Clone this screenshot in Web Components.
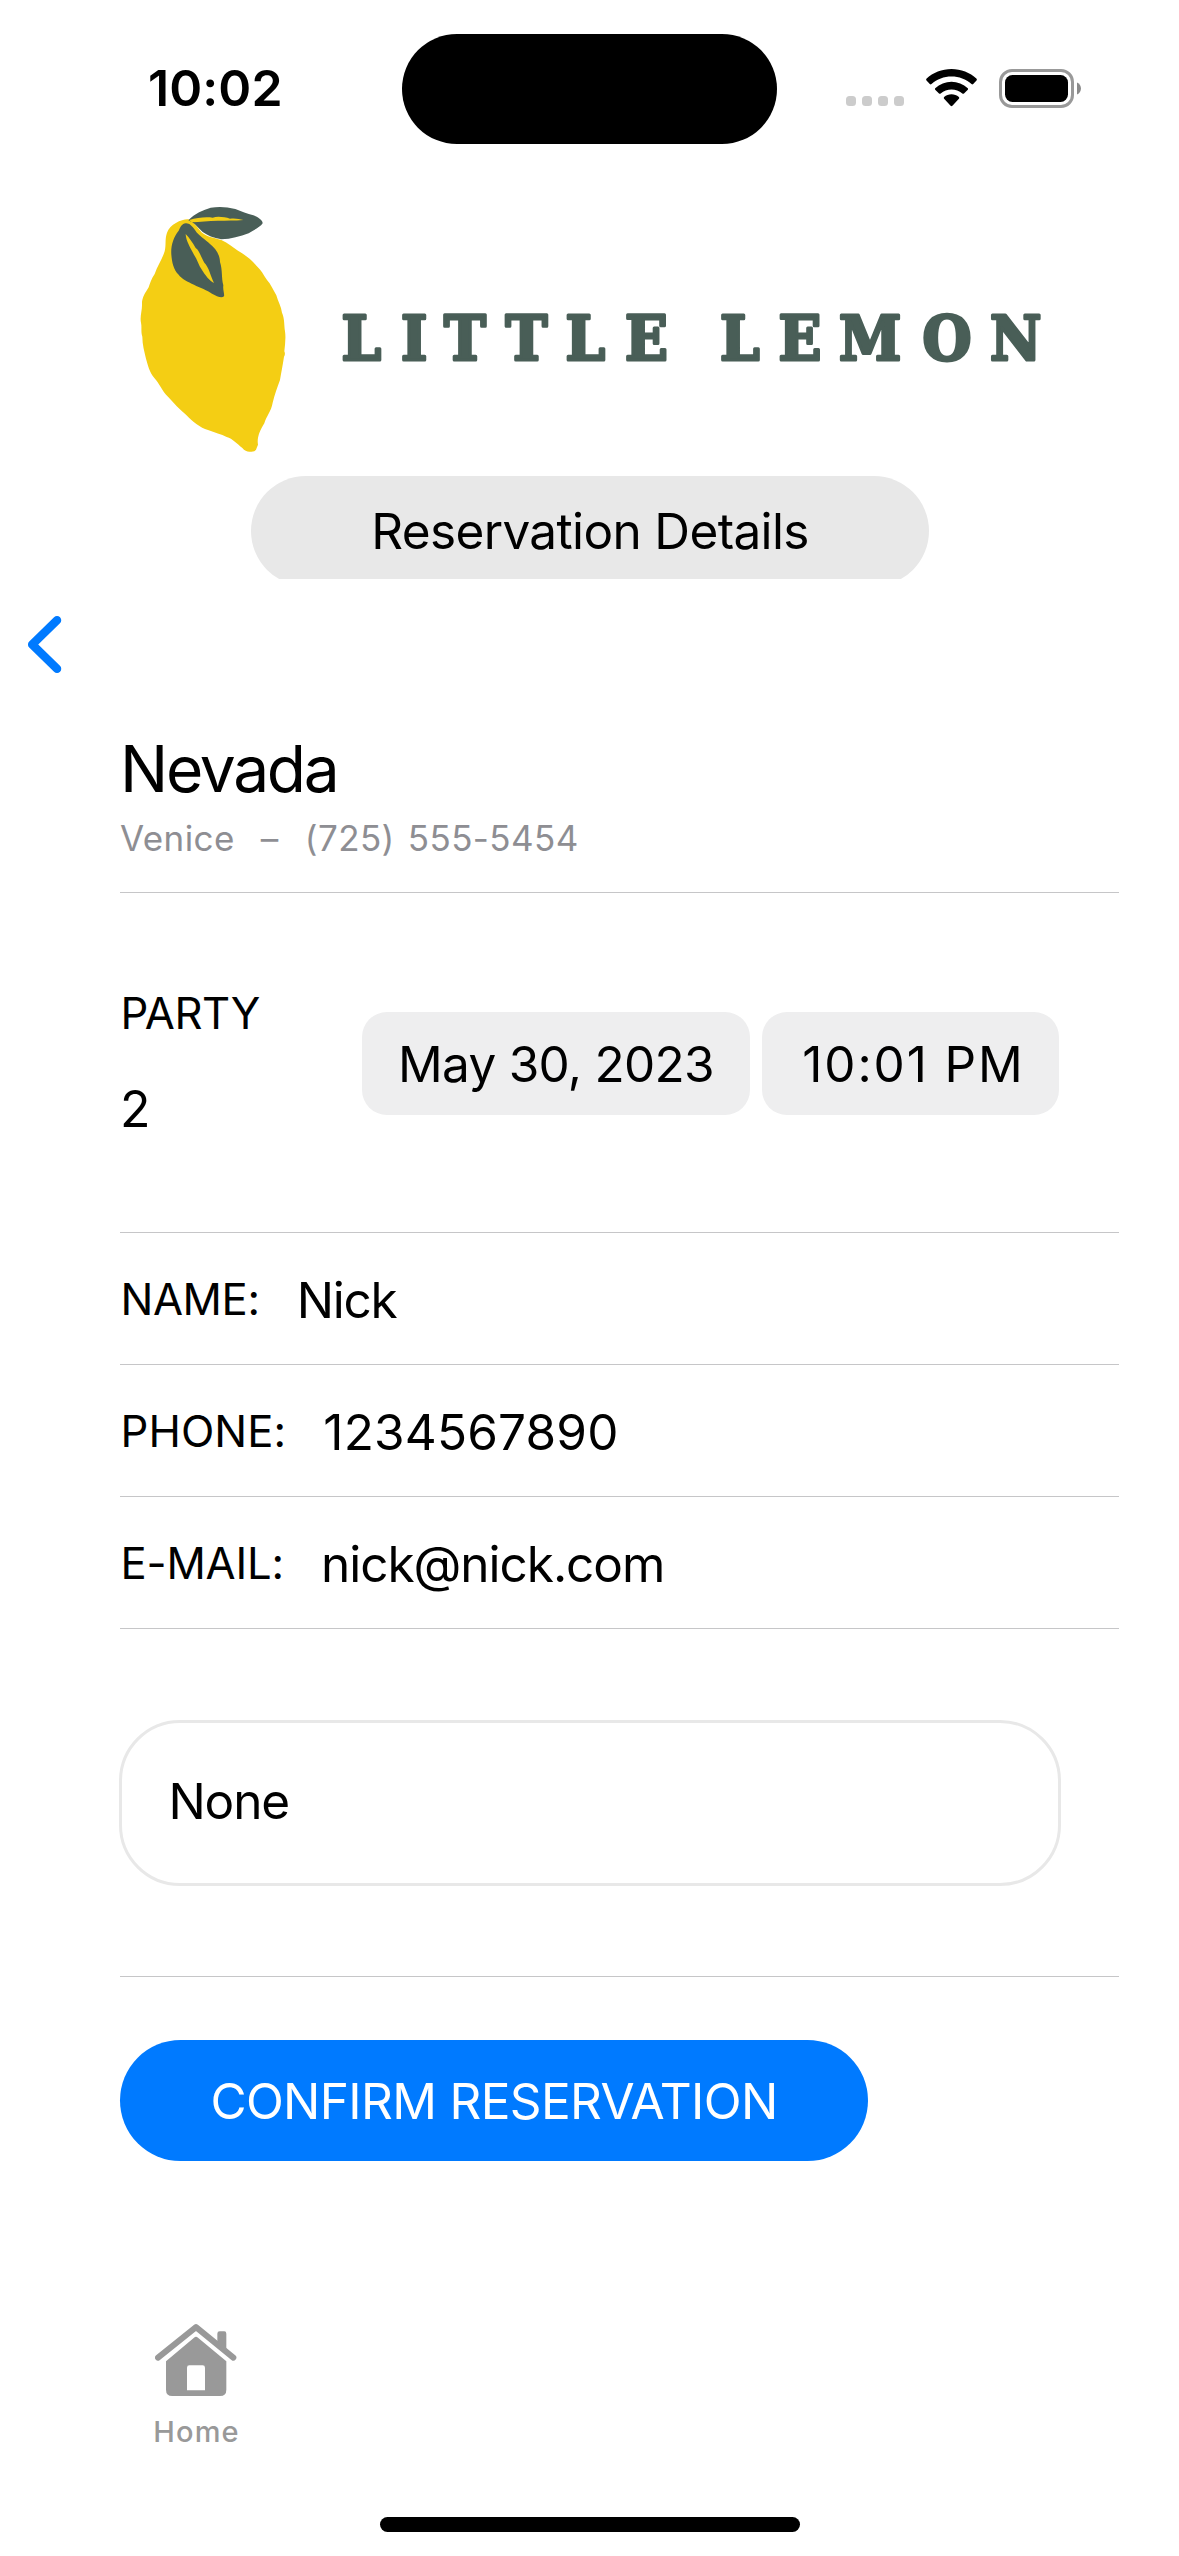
<!DOCTYPE html>
<html lang="en">
<head>
<meta charset="utf-8">
<title>Little Lemon – Reservation Details</title>
<style>
  html, body { margin: 0; background: #fff; }
  body { font-family: Inter, "Liberation Sans", sans-serif; color: #000; }
</style>
</head>
<body>
<reservation-page></reservation-page>

<script>
const define = (name, html) => {
  const template = document.createElement('template');
  template.innerHTML = html;
  customElements.define(name, class extends HTMLElement {
    constructor() {
      super();
      this.attachShadow({ mode: 'open' }).append(template.content.cloneNode(true));
    }
  });
};

define('status-bar', `
  <style>
    :host { display: flex; height: 176px; align-items: center; box-sizing: border-box; padding: 0 90px 0 148px; }
    .time { width: 254px; font-size: 50px; line-height: 60px; font-weight: 600; letter-spacing: .1px; }
    .island { width: 375px; height: 110px; border-radius: 56px; background: #000; margin-top: 2px; }
    .dots { display: flex; gap: 6px; margin: 26px 0 0 69px; }
    .dots i { width: 10px; height: 10px; border-radius: 3.5px; background: #ccc; }
    .wifi { margin-left: 22px; }
    .battery { margin-left: 22px; }
    .island, svg { flex: none; }
    svg { display: block; }
  </style>
  <div class="time">10:02</div>
  <div class="island"></div>
  <div class="dots"><i></i><i></i><i></i><i></i></div>
  <svg class="wifi" width="51" height="38" viewBox="0 0 51 38">
    <path d="M25.500 0C35 0 44 3.500 50.600 9.800Q51.200 10.700 50.500 11.500L47.200 15Q46.300 15.800 45.500 15C40 10 33 7.500 25.500 7.500S11 10 5.500 15Q4.700 15.800 3.800 15L.5 11.500Q-.2 10.700 .4 9.800C7 3.500 16 0 25.500 0Z"/>
    <path d="M25.500 12.800C31.500 12.800 37.300 15 41.800 19.200Q42.500 20 41.800 20.800L38 24.400Q37.200 25.100 36.300 24.400C33.300 21.800 29.500 20.400 25.500 20.400S17.700 21.800 14.700 24.400Q13.800 25.100 13 24.400L9.200 20.800Q8.500 20 9.200 19.200C13.700 15 19.500 12.800 25.500 12.800Z"/>
    <path d="M25.500 25.300C28.200 25.300 30.800 26.300 32.900 28.100Q33.700 29 32.900 29.800L26.400 36.700Q25.500 37.600 24.600 36.700L18.100 29.800Q17.300 29 18.100 28.100C20.200 26.300 22.800 25.300 25.500 25.300Z"/>
  </svg>
  <svg class="battery" width="82" height="39" viewBox="0 0 82 39">
    <rect x="1.500" y="1.500" width="72" height="36" rx="11.500" fill="none" stroke="#999" stroke-width="3"/>
    <rect x="6" y="6" width="63" height="27" rx="7.500"/>
    <path d="M78 13.500C83.300 15.800 83.300 23.200 78 25.500Z" fill="#8a8a8a"/>
  </svg>
`);

define('lemon-logo', `
  <style>
    :host { display: block; margin: 14px 0 0 120px; }
    svg { display: block; }
    text { font: bold 62.5px "DejaVu Serif Condensed", "DejaVu Serif", serif; font-stretch: condensed; fill: #495e57; stroke: #495e57; stroke-width: 3px; stroke-linejoin: round; }
  </style>
  <svg width="940" height="280" viewBox="0 0 940 280">
    <g transform="scale(.33333)">
      <path fill="#f4ce14" d="M205 88C185 87 150 103 141 128C134 148 139 163 134 184C128 205 112 228 104 252C94 266 90 280 86 292C76 308 65 325 66 342C67 360 59 380 63 398C66 412 62 424 67 440C67 464 73 484 78 506C84 526 88 546 103 564C119 581 126 603 144 620C162 640 178 658 198 674C220 697 240 712 264 720C284 728 304 732 320 741C338 746 352 762 367 774Q378 787 392 785Q409 786 410 774L414 764C410 744 420 720 433 700C438 680 454 664 458 638C464 614 472 592 480 570C484 546 488 526 492 500Q497 492 493 484C495 464 498 444 495 424C492 404 494 386 486 368C484 350 474 334 469 316C460 300 452 282 441 270C430 254 424 240 410 228C394 208 374 194 354 182C338 172 325 160 304 150C282 142 264 142 246 128C230 112 222 94 205 88Z"/>
      <path fill="#495e57" d="M205 91C224 70 250 60 272 53C296 49 320 50 346 57C364 64 382 72 400 76C414 82 428 90 428 100C420 112 404 118 386 130C360 140 334 147 304 148C280 144 262 136 248 126C236 116 228 104 217 97L205 91Z"/>
      <path fill="#f4ce14" d="M208 90C232 82 260 80 278 83C292 78 314 81 330 86C346 84 358 87 370 90C344 92 320 92 294 92C264 93 240 95 215 97Z"/>
      <path fill="#495e57" d="M197 100C208 99 216 108 225 120C236 138 256 148 270 162C286 174 300 194 300 216C308 240 304 264 310 286C308 300 314 312 312 319C304 326 290 318 276 311C262 300 240 294 222 284C204 276 184 266 176 254C160 238 156 216 154 194C152 168 160 142 176 122C182 110 186 101 197 100Z"/>
      <path fill="#f4ce14" d="M197 132C208 143 218 158 227 174C238 180 243 202 253 218C266 230 272 258 282 279C268 272 256 256 246 240C236 226 232 208 222 194C212 174 198 154 197 132Z"/>
    </g>
    <text y="170.200" x="221.500 281 324 385.500 445.500 505">LITTLE</text>
    <text y="170.200" x="600 658.500 719 802.500 870">LEMON</text>
  </svg>
`);

define('page-title', `
  <style>
    :host { display: block; width: 678px; height: 103px; margin: 6px 0 0 251px; overflow: hidden; }
    div { height: 110px; border-radius: 55px; background: #e8e8e8; font-size: 49.500px; line-height: 110px; letter-spacing: -.64px; text-align: center; }
  </style>
  <div><slot></slot></div>
`);

define('back-button', `
  <style>
    :host { display: block; padding: 33px 0 0 26px; height: 65px; }
    svg { display: block; }
  </style>
  <svg width="40" height="63" viewBox="0 0 40 63"><path d="M31 8.200L6.200 32.500L31 56.800" fill="none" stroke="#007aff" stroke-width="8.500" stroke-linecap="round" stroke-linejoin="round"/></svg>
`);

define('venue-header', `
  <style>
    :host { display: block; margin-left: 120px; padding: 51.500px 0 32px; border-bottom: 1px solid #c6c6c8; }
    .name { font-size: 64px; line-height: 80px; letter-spacing: -2.270px; }
    .place { margin-top: 7.500px; font-size: 35px; line-height: 44px; letter-spacing: .4px; word-spacing: 2.800px; color: #8e8e93; white-space: pre; }
  </style>
  <div class="name"><slot name="name"></slot></div>
  <div class="place"><slot name="place"></slot></div>
`);

define('date-pill', `
  <style>
    :host { display: block; box-sizing: border-box; height: 103px; border-radius: 25px; background: #eeeeef; font-size: 49.500px; line-height: 104px; text-align: center; white-space: nowrap; }
  </style>
  <slot></slot>
`);

define('party-section', `
  <style>
    :host { display: flex; margin-left: 120px; height: 339px; box-sizing: content-box; border-bottom: 1px solid #c6c6c8; }
    .party { width: 242px; padding-top: 91px; display: flex; flex-direction: column; gap: 35px; }
    .label { font-size: 43.600px; line-height: 60px; letter-spacing: -.4px; padding-left: .5px; }
    .count { font-size: 50px; line-height: 60px; }
    .pills { display: flex; gap: 12px; padding-top: 119px; }
    date-pill:first-child { width: 388px; letter-spacing: -.714px; }
    date-pill:last-child { width: 297px; letter-spacing: 1.900px; padding-left: 6px; }
  </style>
  <div class="party">
    <div class="label">PARTY</div>
    <div class="count"><slot name="count"></slot></div>
  </div>
  <div class="pills">
    <date-pill>May 30, 2023</date-pill>
    <date-pill>10:01 PM</date-pill>
  </div>
`);

define('detail-row', `
  <style>
    :host { display: flex; gap: 37.200px; align-items: center; height: 131px; margin-left: 120px; border-bottom: 1px solid #c6c6c8; }
    .label { font-size: 43.600px; line-height: 60px; padding: 3px 0 0 .5px; letter-spacing: var(--label-spacing, 0); }
    .value { font-size: 49.500px; line-height: 60px; padding-top: 3px; letter-spacing: var(--value-spacing, 0); }
  </style>
  <div class="label"><slot name="label"></slot></div>
  <div class="value"><slot></slot></div>
`);

define('note-field', `
  <style>
    :host { display: block; margin-left: 120px; height: 347px; border-bottom: 1px solid #c6c6c8; }
    .wrap { padding: 91px 0 0; }
    .box { box-sizing: border-box; width: 942px; height: 166px; margin-left: -1px; border: 3px solid #e8e8e8; border-radius: 61px; padding-left: 46.500px; font-size: 49.500px; line-height: 156px; letter-spacing: -1.170px; }
  </style>
  <div class="wrap"><div class="box"><slot></slot></div></div>
`);

define('confirm-button', `
  <style>
    :host { display: block; margin: 63px 0 0 120px; width: 748px; height: 121px; border-radius: 60.500px; background: #007aff; color: #fff; font-size: 49.500px; line-height: 122px; letter-spacing: -.649px; text-align: center; }
  </style>
  <slot></slot>
`);

define('tab-item', `
  <style>
    :host { display: flex; flex-direction: column; align-items: center; width: 84px; margin: 163px 0 0 154px; color: #999; }
    svg { display: block; }
    div { margin-top: 19.500px; font-size: 29px; line-height: 32px; font-weight: 500; letter-spacing: 1.170px; white-space: nowrap; padding-left: 1px; }
  </style>
  <svg width="82" height="72" viewBox="0 0 246 216" fill="currentColor">
    <path d="M9 101L123 9.500L235 101" fill="none" stroke="currentColor" stroke-width="18" stroke-linecap="round" stroke-linejoin="round"/>
    <path d="M187 62V29Q187 22 194 22H208Q214 22 214 29V82Z"/>
    <path fill-rule="evenodd" d="M33 112L117 41Q123 36 129 41L214 112V197Q214 216 195 216H52Q33 216 33 197ZM96 131V199H150V131Q150 124 143 124H103Q96 124 96 131Z"/>
  </svg>
  <div><slot></slot></div>
`);

define('home-indicator', `
  <style>
    :host { display: block; width: 420px; height: 15px; margin: 69px 0 0 380px; border-radius: 8px; background: #000; }
  </style>
`);

define('reservation-page', `
  <style>
    :host { display: flex; flex-direction: column; width: 1179px; height: 2556px; overflow: hidden; background: #fff; }
    .list { padding-right: 60px; }
  </style>
  <status-bar></status-bar>
  <lemon-logo></lemon-logo>
  <page-title>Reservation Details</page-title>
  <back-button></back-button>
  <div class="list">
    <venue-header>
      <span slot="name">Nevada</span>
      <span slot="place">Venice  –  (725) 555-5454</span>
    </venue-header>
    <party-section><span slot="count">2</span></party-section>
    <detail-row style="--label-spacing:-.4px;--value-spacing:-1.250px"><span slot="label">NAME:</span>Nick</detail-row>
    <detail-row style="--label-spacing:.076px;--value-spacing:.17px"><span slot="label">PHONE:</span>1234567890</detail-row>
    <detail-row style="--label-spacing:-.178px;--value-spacing:-1.040px"><span slot="label">E-MAIL:</span>nick@nick.com</detail-row>
    <note-field>None</note-field>
  </div>
  <confirm-button>CONFIRM RESERVATION</confirm-button>
  <tab-item>Home</tab-item>
  <home-indicator></home-indicator>
`);
</script>
</body>
</html>
